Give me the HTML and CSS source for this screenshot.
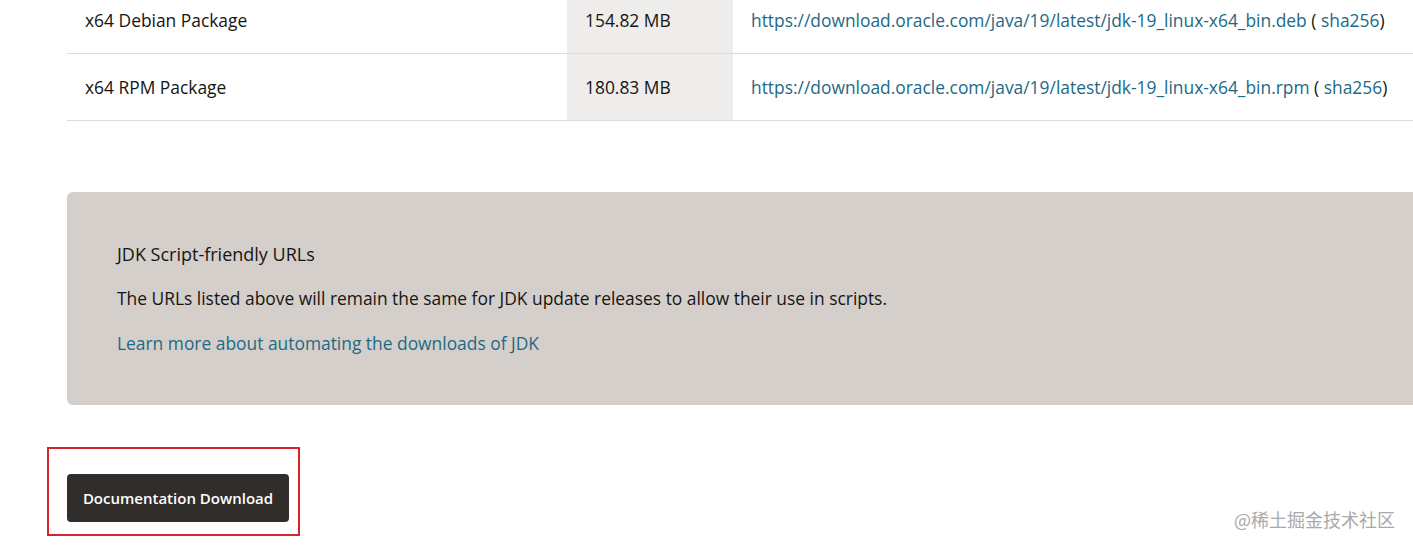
FILE: index.html
```html
<!DOCTYPE html>
<html lang="en">
<head>
<meta charset="utf-8">
<title>JDK 19 Downloads</title>
<link rel="stylesheet" href="styles.css">
</head>
<body>
<main class="page">
  <table class="downloads">
    <tbody>
      <tr>
        <td class="c-name">x64 Debian Package</td>
        <td class="c-size">154.82 MB</td>
        <td class="c-link"><a href="#">https://download.oracle.com/java/19/latest/jdk-19_linux-x64_bin.deb</a> ( <a href="#">sha256</a>)</td>
      </tr>
      <tr>
        <td class="c-name">x64 RPM Package</td>
        <td class="c-size">180.83 MB</td>
        <td class="c-link"><a href="#">https://download.oracle.com/java/19/latest/jdk-19_linux-x64_bin.rpm</a> ( <a href="#">sha256</a>)</td>
      </tr>
    </tbody>
  </table>

  <section class="note">
    <p class="note-title">JDK Script-friendly URLs</p>
    <p class="note-text">The URLs listed above will remain the same for JDK update releases to allow their use in scripts.</p>
    <p class="note-link"><a href="#">Learn more about automating the downloads of JDK</a></p>
  </section>

  <div class="highlight">
    <a class="btn" href="#">Documentation Download</a>
  </div>
</main>
<div class="watermark">@稀土掘金技术社区</div>
</body>
</html>
```

FILE: styles.css
```css
html, body {
  margin: 0;
  padding: 0;
  background: #ffffff;
  overflow: hidden;
}
body {
  width: 1413px;
  height: 548px;
  position: relative;
  font-family: "Open Sans", "Noto Sans", sans-serif;
  color: #161513;
  font-size: 17.4px;
}
.page {
  padding-left: 67px;
  width: 1500px;
}
a {
  color: #1d6a86;
  text-decoration: none;
}
.downloads {
  border-collapse: collapse;
  width: 1450px;
  margin-top: -13px;
}
.downloads td {
  height: 66px;
  padding: 0 0 0 18px;
  border-bottom: 1px solid #dfdcd8;
  white-space: nowrap;
  vertical-align: middle;
}
.c-name { width: 482px; }
.c-size { width: 148px; background: #efedeb; }
.note {
  margin-top: 71px;
  width: 1450px;
  height: 213px;
  box-sizing: border-box;
  background: #d4cfca;
  border-radius: 6px;
  padding: 50px 50px 0;
}
.note p {
  margin: 0;
  line-height: 24px;
}
.note-title { font-size: 18px; }
.note-text { margin-top: 20px !important; }
.note-link { margin-top: 21px !important; }
.highlight {
  display: inline-block;
  margin-left: -20px;
  margin-top: 42px;
  padding: 25px 9px 12px 18px;
  border: 2px solid #d8232d;
}
.btn {
  display: block;
  width: 222px;
  height: 48px;
  line-height: 48px;
  text-align: center;
  background: #312d2a;
  color: #ffffff;
  border-radius: 4px;
  font-size: 15px;
  font-weight: 600;
}
.watermark {
  position: absolute;
  right: 18px;
  top: 506px;
  font-family: "Noto Sans CJK SC", sans-serif;
  font-size: 18px;
  color: #a9a9a9;
}
```
